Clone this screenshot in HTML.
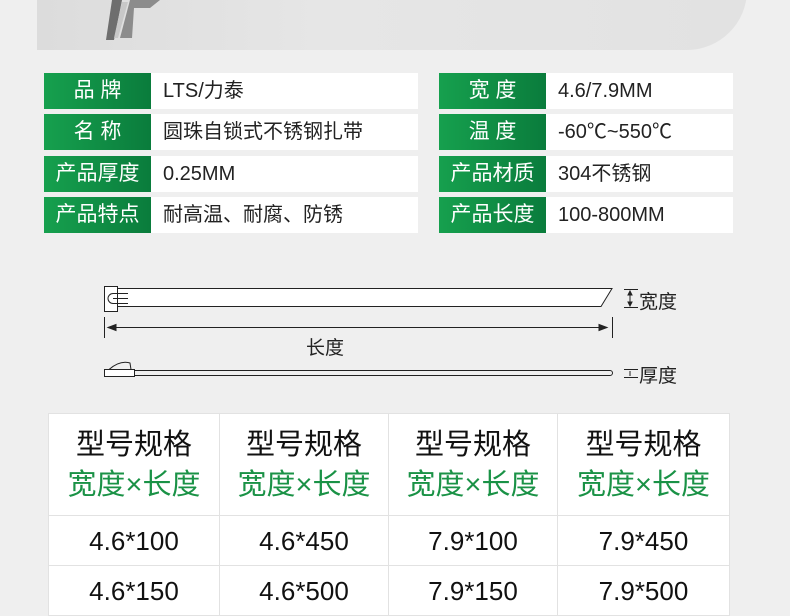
<!DOCTYPE html>
<html><head><meta charset="utf-8"><style>
body{margin:0;width:790px;height:600px;overflow:hidden;background:#efefef;font-family:"Liberation Sans","Noto Sans CJK SC",sans-serif;position:relative}
.top{position:absolute;left:37px;top:-20px;width:710px;height:70px;background:linear-gradient(90deg,#dcdcdc,#e6e6e6 40%,#e2e2e2);border-bottom-right-radius:60px}
.row{position:absolute;height:36px;display:flex}
.lab{width:107px;background:linear-gradient(90deg,#16a04e,#0a7c3c);color:#fff;font-size:21px;line-height:36px;text-align:center;letter-spacing:0}
.val{background:#fff;color:#222;font-size:20px;line-height:36px;padding-left:12px}
table{position:absolute;left:48px;top:413px;border-collapse:collapse;background:#fff;table-layout:fixed;width:681px}
td{border:1px solid #e2e2e2;text-align:center;color:#111;padding:0;box-sizing:border-box}
.h{height:102px;font-size:29px;line-height:40px}
.g{color:#1a9246}
.n{height:50px;font-size:26px;line-height:48px}
</style></head><body>
<div class="top"></div>
<svg style="position:absolute;left:100px;top:0" width="80" height="45"><path d="M12 0 H22 L14 40 H6Z" fill="#6e6e6e"/><path d="M30 0 H60 L50 8 H34 L32 38 H20Z" fill="#8c8c8c"/><path d="M22 2 H28 L18 38 H14Z" fill="#c8c8c8"/></svg>

<div class="row" style="left:44px;top:73px"><div class="lab">品 牌</div><div class="val" style="width:255px">LTS/力泰</div></div>
<div class="row" style="left:44px;top:114px"><div class="lab">名 称</div><div class="val" style="width:255px">圆珠自锁式不锈钢扎带</div></div>
<div class="row" style="left:44px;top:156px"><div class="lab">产品厚度</div><div class="val" style="width:255px">0.25MM</div></div>
<div class="row" style="left:44px;top:197px"><div class="lab">产品特点</div><div class="val" style="width:255px">耐高温、耐腐、防锈</div></div>
<div class="row" style="left:439px;top:73px"><div class="lab">宽 度</div><div class="val" style="width:175px">4.6/7.9MM</div></div>
<div class="row" style="left:439px;top:114px"><div class="lab">温 度</div><div class="val" style="width:175px">-60℃~550℃</div></div>
<div class="row" style="left:439px;top:156px"><div class="lab">产品材质</div><div class="val" style="width:175px">304不锈钢</div></div>
<div class="row" style="left:439px;top:197px"><div class="lab">产品长度</div><div class="val" style="width:175px">100-800MM</div></div>

<svg style="position:absolute;left:0;top:270px" width="790" height="120" fill="none" stroke="#222" stroke-width="1">
<rect x="104.5" y="16.5" width="13" height="25" fill="#fff"/>
<path d="M117.5 18.5 H612 L601 36.5 H117.5" fill="#fff"/>
<path d="M128 23.5 H113 a5 5 0 0 0 0 10 H128 M113 28.5 H128"/>
<path d="M104.5 20 V37 M117.5 18.5 V38.5"/>
<path d="M624 19.5 H638 M624 37.5 H638 M630 21 V36"/>
<path d="M630 21 l-2 4 h4z M630 36 l-2 -4 h4z" fill="#222"/>
<path d="M104.5 47 V68 M612.5 47 V68 M110 57.5 H606"/>
<path d="M108 57.5 l8 -3 v6z M607 57.5 l-8 -3 v6z" fill="#222"/>
<rect x="104.5" y="99.5" width="30" height="7" fill="#fff"/>
<path d="M134.5 100.5 H610 a2.5 2.5 0 0 1 0 5 H134.5"/>
<path d="M109 99.5 Q120 90 130 93 L131 99.5"/>
<path d="M624 99.5 H638 M624 107.5 H638 M630 101 V106"/>
</svg>
<div style="position:absolute;left:639px;top:287px;font-size:19px;color:#222">宽度</div>
<div style="position:absolute;left:306px;top:333px;font-size:19px;color:#222">长度</div>
<div style="position:absolute;left:639px;top:361px;font-size:19px;color:#222">厚度</div>

<table>
<colgroup><col style="width:171px"><col style="width:169px"><col style="width:169px"><col style="width:172px"></colgroup>
<tr><td class="h">型号规格<br><span class="g">宽度×长度</span></td><td class="h">型号规格<br><span class="g">宽度×长度</span></td><td class="h">型号规格<br><span class="g">宽度×长度</span></td><td class="h">型号规格<br><span class="g">宽度×长度</span></td></tr>
<tr><td class="n">4.6*100</td><td class="n">4.6*450</td><td class="n">7.9*100</td><td class="n">7.9*450</td></tr>
<tr><td class="n">4.6*150</td><td class="n">4.6*500</td><td class="n">7.9*150</td><td class="n">7.9*500</td></tr>
</table>
</body></html>
